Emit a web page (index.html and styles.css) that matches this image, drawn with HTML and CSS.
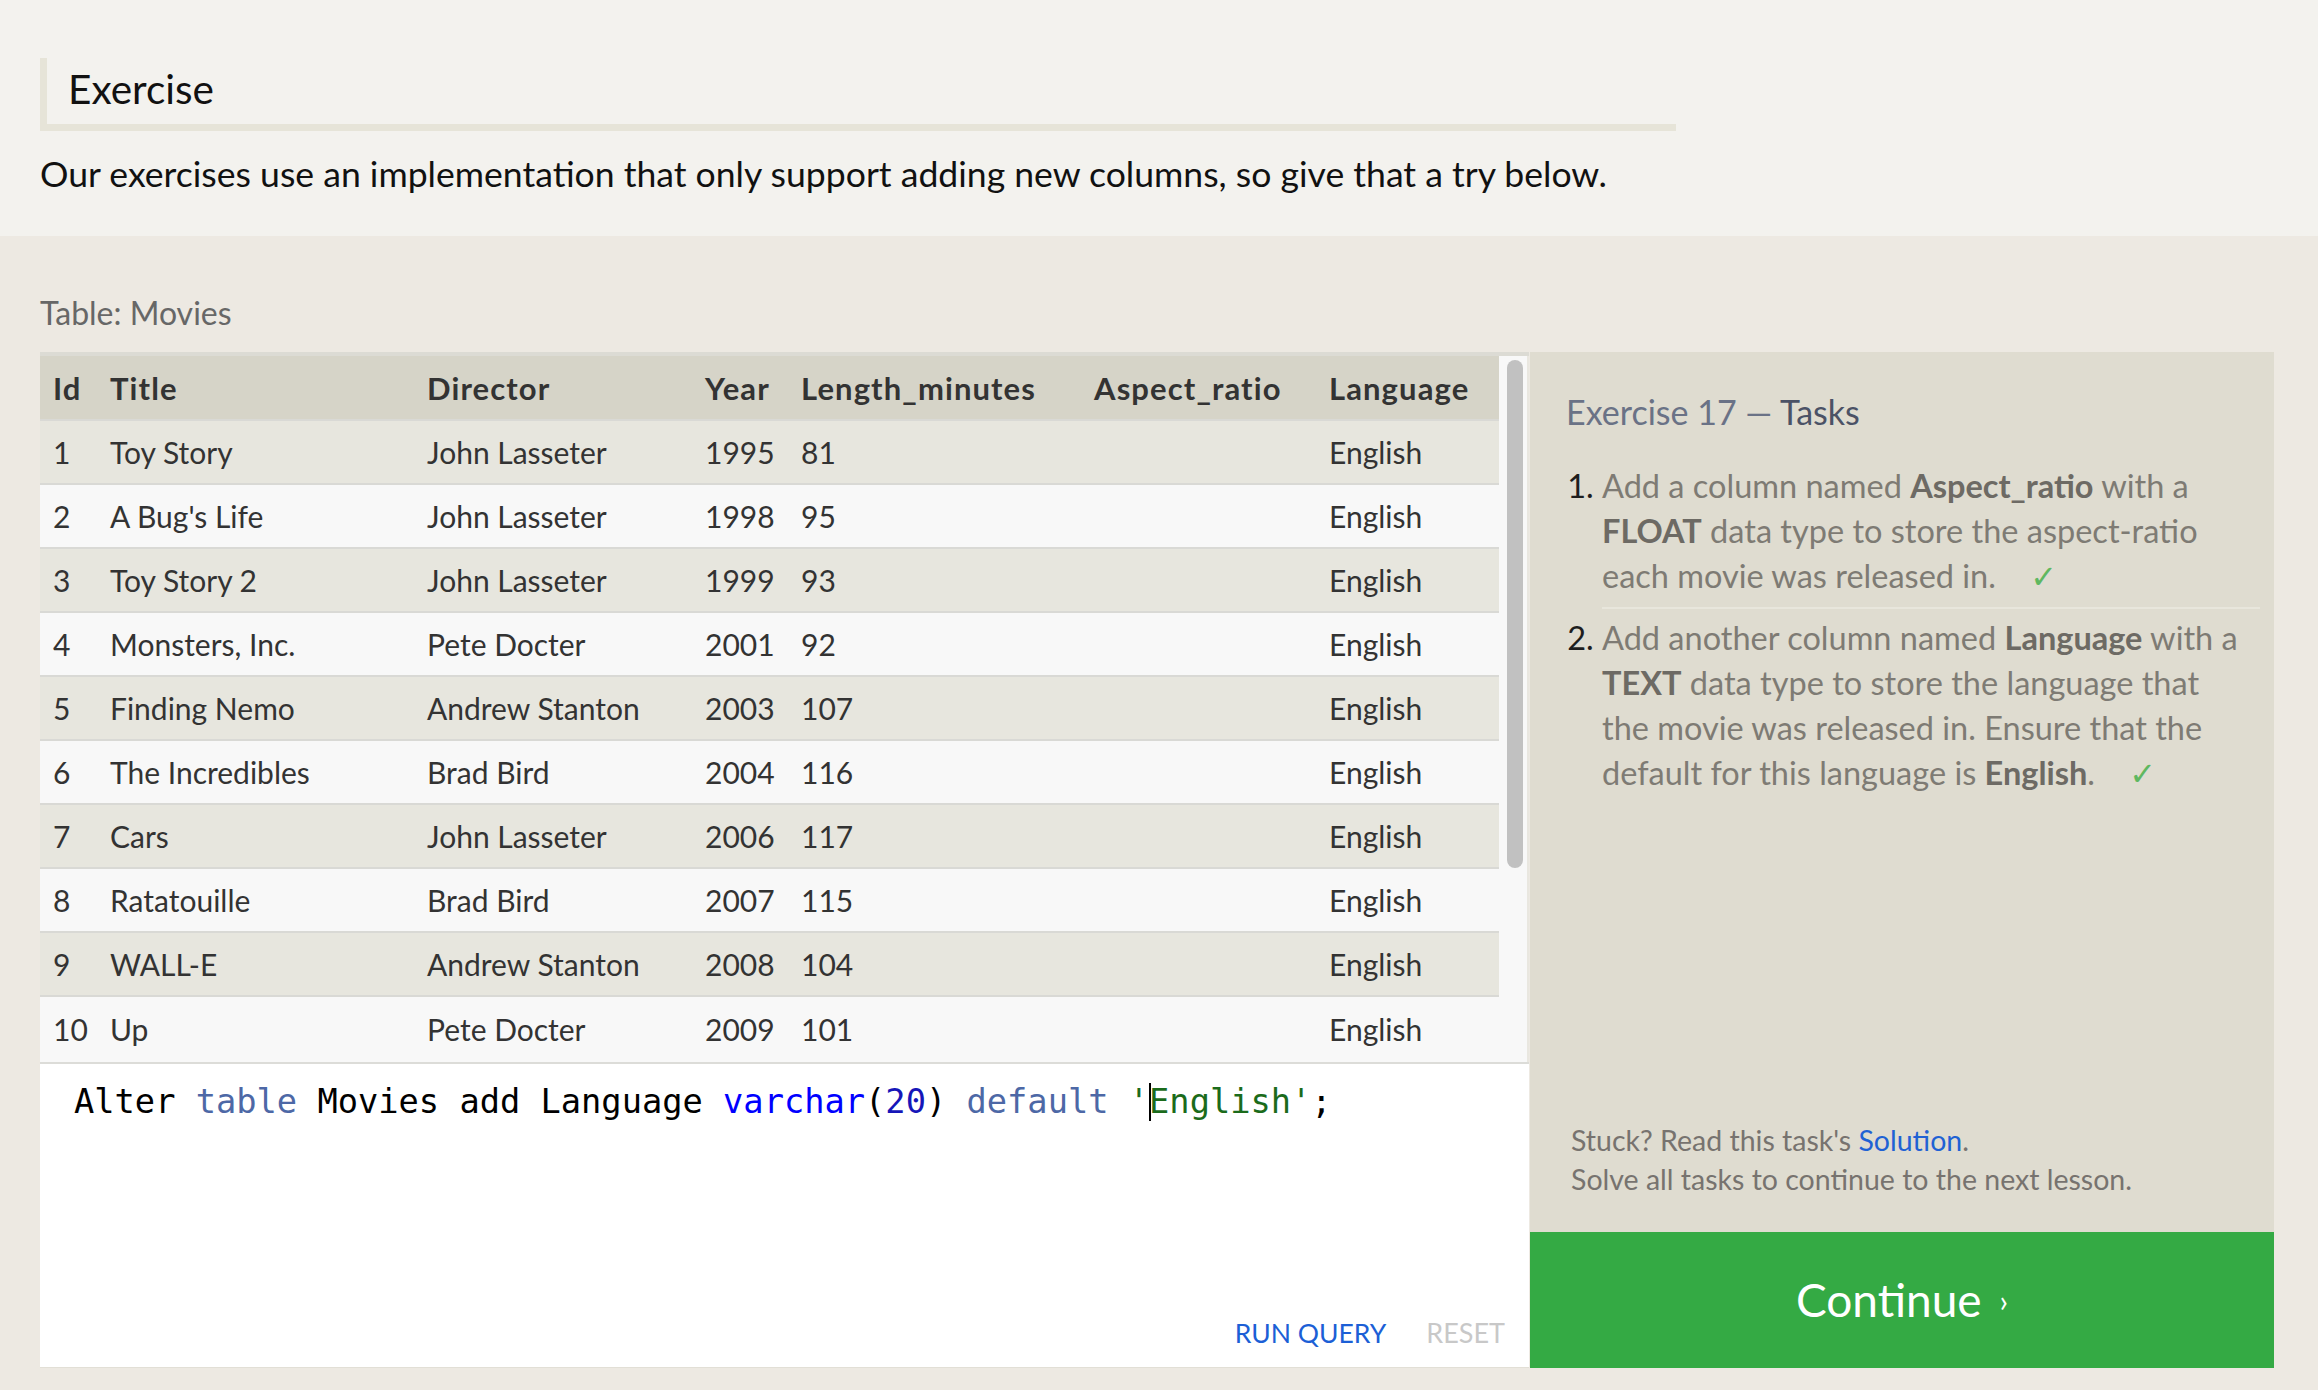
FILE: index.html
```html
<!DOCTYPE html>
<html lang="en">
<head>
<meta charset="utf-8">
<title>Exercise 17 — Tasks</title>
<link rel="stylesheet" href="styles.css">
</head>
<body>
<div class="top">
  <div class="ex-box"><h2 class="ex-title">Exercise</h2></div>
  <p class="intro">Our exercises use an implementation that only support adding new columns, so give that a try below.</p>
</div>
<div class="lower">
  <div class="table-label">Table: Movies</div>
  <div class="workspace">
    <div class="left">
      <div class="table-wrap">
        <div class="table-view">
          <table class="movies">
            <colgroup>
              <col class="c-id"><col class="c-title"><col class="c-dir"><col class="c-year"><col class="c-len"><col class="c-asp"><col class="c-lang">
            </colgroup>
            <thead>
              <tr><th>Id</th><th>Title</th><th>Director</th><th>Year</th><th>Length_minutes</th><th>Aspect_ratio</th><th>Language</th></tr>
            </thead>
            <tbody>
              <tr><td>1</td><td>Toy Story</td><td>John Lasseter</td><td>1995</td><td>81</td><td></td><td>English</td></tr>
              <tr><td>2</td><td>A Bug's Life</td><td>John Lasseter</td><td>1998</td><td>95</td><td></td><td>English</td></tr>
              <tr><td>3</td><td>Toy Story 2</td><td>John Lasseter</td><td>1999</td><td>93</td><td></td><td>English</td></tr>
              <tr><td>4</td><td>Monsters, Inc.</td><td>Pete Docter</td><td>2001</td><td>92</td><td></td><td>English</td></tr>
              <tr><td>5</td><td>Finding Nemo</td><td>Andrew Stanton</td><td>2003</td><td>107</td><td></td><td>English</td></tr>
              <tr><td>6</td><td>The Incredibles</td><td>Brad Bird</td><td>2004</td><td>116</td><td></td><td>English</td></tr>
              <tr><td>7</td><td>Cars</td><td>John Lasseter</td><td>2006</td><td>117</td><td></td><td>English</td></tr>
              <tr><td>8</td><td>Ratatouille</td><td>Brad Bird</td><td>2007</td><td>115</td><td></td><td>English</td></tr>
              <tr><td>9</td><td>WALL-E</td><td>Andrew Stanton</td><td>2008</td><td>104</td><td></td><td>English</td></tr>
              <tr><td>10</td><td>Up</td><td>Pete Docter</td><td>2009</td><td>101</td><td></td><td>English</td></tr>
            </tbody>
          </table>
        </div>
        <div class="scrollbar"><div class="thumb"></div></div>
      </div>
      <div class="editor">
        <div class="code"><span class="kw-plain">Alter</span> <span class="kw">table</span> Movies add Language <span class="type">varchar</span>(<span class="num">20</span>) <span class="kw">default</span> <span class="str">'<span class="cursor"></span>English'</span>;</div>
        <div class="actions"><span class="run">RUN QUERY</span><span class="reset">RESET</span></div>
      </div>
    </div>
    <div class="panel">
      <div class="tasks">
        <h3 class="tasks-title">Exercise 17 — <span class="tasks-word">Tasks</span></h3>
        <ol class="task-list">
          <li class="task">Add a column named <b>Aspect_ratio</b> with a<br><b>FLOAT</b> data type to store the aspect-ratio<br>each movie was released in. <span class="check">✓</span></li>
          <li class="task">Add another column named <b>Language</b> with a<br><b>TEXT</b> data type to store the language that<br>the movie was released in. Ensure that the<br>default for this language is <b>English</b>. <span class="check">✓</span></li>
        </ol>
      </div>
      <div class="stuck">
        <div>Stuck? Read this task's <span class="link">Solution</span>.</div>
        <div>Solve all tasks to continue to the next lesson.</div>
      </div>
      <div class="continue"><span>Continue</span><span class="chev">›</span></div>
    </div>
  </div>
</div>
</body>
</html>
```
FILE: styles.css
```css
html, body {
  margin: 0;
  padding: 0;
}
body {
  background: #ede9e2;
  font-family: Lato, "Open Sans", "Liberation Sans", sans-serif;
  color: #111;
  width: 2318px;
  height: 1390px;
  overflow: hidden;
}

/* ---------- top ---------- */
.top {
  background: #f3f2ee;
  height: 236px;
  padding: 58px 0 0 40px;
  box-sizing: border-box;
}
.ex-box {
  width: 1636px;
  box-sizing: border-box;
  border-left: 7px solid #e6e4d8;
  border-bottom: 7px solid #e6e4d8;
  padding: 0 0 4px 21px;
}
.ex-title {
  margin: 0;
  font-weight: 400;
  font-size: 40.5px;
  line-height: 62px;
  color: #111;
}
.intro {
  margin: 23px 0 0 0;
  font-size: 35.6px;
  line-height: 40px;
  color: #111;
}

/* ---------- lower ---------- */
.lower {
  padding: 57px 0 0 40px;
}
.table-label {
  font-size: 32px;
  line-height: 40px;
  color: #676767;
  margin-bottom: 19px;
}
.workspace {
  display: flex;
  width: 2234px;
  height: 1016px;
  gap: 1px;
}
.left {
  width: 1489px;
  display: flex;
  flex-direction: column;
}
.table-wrap {
  display: flex;
  height: 710px;
  border-top: 4px solid #dcdbd4;
  box-sizing: border-box;
  background: #f8f8f8;
}
.table-view {
  flex: none;
  width: 1459px;
  overflow: hidden;
}
.movies {
  border-collapse: collapse;
  table-layout: fixed;
  width: 1459px;
  font-size: 30px;
  color: #333;
}
.c-id { width: 57px; }
.c-title { width: 317px; }
.c-dir { width: 278px; }
.c-year { width: 96px; }
.c-len { width: 293px; }
.c-asp { width: 235px; }
.c-lang { width: 183px; }
.movies th {
  background: #d6d4c8;
  font-weight: 700;
  font-size: 31px;
  letter-spacing: 1.1px;
  text-align: left;
  height: 64px;
  padding: 0 0 0 13px;
  white-space: nowrap;
  box-sizing: border-box;
}
.movies td {
  height: 64px;
  padding: 0 0 0 13px;
  border-top: 2px solid #d9d9d5;
  white-space: nowrap;
  box-sizing: border-box;
}
.movies tbody tr:nth-child(odd) td { background: #e7e6de; }
.movies tbody tr:nth-child(even) td { background: #f8f8f8; }

.scrollbar {
  flex: none;
  width: 30px;
  box-sizing: border-box;
  background: #f8f8f8;
  border-right: 2px solid #e9e7e0;
  padding: 4px 4px 0 8px;
}
.thumb {
  width: 16px;
  height: 508px;
  background: #c1c1c1;
  border-radius: 8px;
}

.editor {
  flex: 1;
  background: #fff;
  border-top: 2px solid #dcdcd8;
  border-bottom: 1px solid #e2dfd6;
  display: flex;
  flex-direction: column;
  justify-content: space-between;
  padding: 18px 24px 16px 34px;
}
.code {
  font-family: "DejaVu Sans Mono", "Liberation Mono", monospace;
  font-size: 33.7px;
  line-height: 40px;
  color: #000;
  white-space: pre;
}
.kw { color: #4d68a6; }
.type { color: #0000ff; }
.num { color: #1616b8; }
.str { color: #1b6b1b; }
.cursor {
  display: inline-block;
  width: 0;
  height: 38px;
  border-left: 2px solid #000;
  vertical-align: -8px;
  margin-right: -2px;
}
.actions {
  display: flex;
  justify-content: flex-end;
  gap: 40px;
  font-size: 26.5px;
  line-height: 36px;
}
.run { color: #1c5fd6; }
.reset { color: #c8c8c8; font-size: 27px; }

/* ---------- panel ---------- */
.panel {
  width: 744px;
  background: #dfdcd0;
  display: flex;
  flex-direction: column;
}
.tasks {
  flex: 1;
  padding: 40px 14px 0 36px;
}
.tasks-title {
  margin: 0;
  font-weight: 400;
  font-size: 34px;
  line-height: 40px;
  color: #6a7286;
}
.tasks-word { color: #4b5266; }
.task-list {
  margin: 31px 0 0 0;
  padding: 0 0 0 36px;
  font-size: 32.5px;
  line-height: 45px;
  color: #7e7b74;
}
.task {
  padding: 0 0 7px 0;
  white-space: nowrap;
}
.task::marker { color: #1e1e1e; }
.task + .task {
  border-top: 2px solid #e8e6dc;
  padding-top: 6px;
}
.task b { color: #6d6a64; font-weight: 700; }
.check {
  color: #5fb860;
  font-family: "DejaVu Sans", sans-serif;
  font-size: 32px;
  margin-left: 26px;
}
.stuck {
  padding: 0 0 33px 41px;
  font-size: 28.5px;
  line-height: 39px;
  color: #77736f;
}
.link { color: #1f62d4; }
.continue {
  height: 136px;
  background: #34aa44;
  color: #fff;
  display: flex;
  justify-content: center;
  align-items: center;
  gap: 18px;
  font-size: 46px;
  line-height: 56px;
}
.chev { font-size: 30px; }
```
